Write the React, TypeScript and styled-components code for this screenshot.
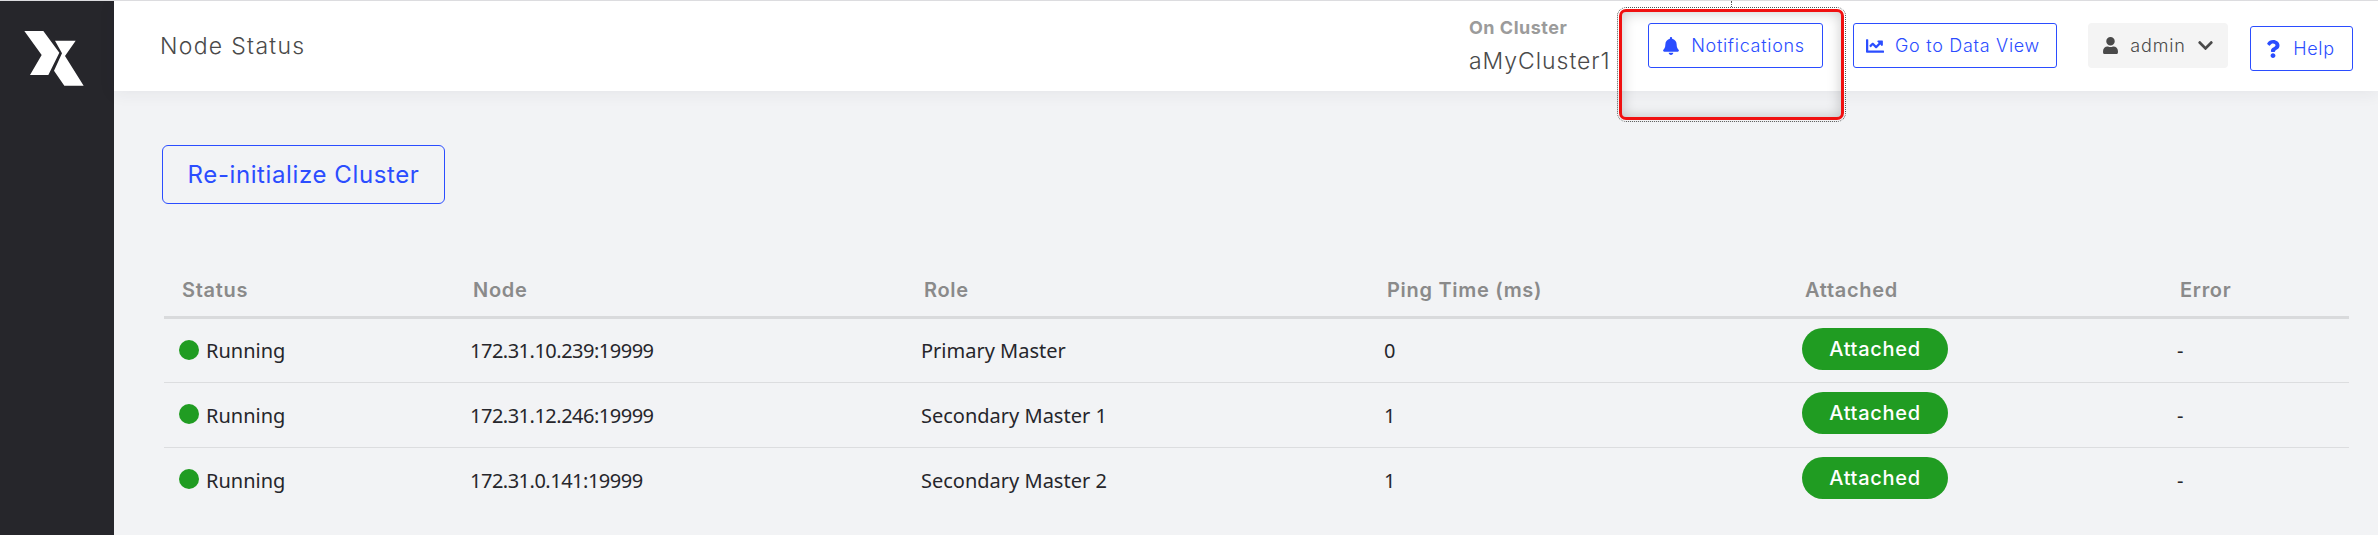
import * as React from 'react';

import styled, { createGlobalStyle } from 'styled-components';
import { FaBell, FaChartLine, FaChevronDown, FaQuestion, FaUser } from 'react-icons/fa';

const BLUE = '#2b4dff';
const GREEN = '#209c22';
const HEADING_FONT = '"Inter", "Noto Sans", sans-serif';
const BODY_FONT = '"Noto Sans", "Open Sans", sans-serif';

const GlobalStyle = createGlobalStyle`
  html, body {
    margin: 0;
    padding: 0;
    background: #f2f3f5;
  }
  * {
    box-sizing: border-box;
  }
`;

const Root = styled.div`
  position: relative;
  display: flex;
  width: 2378px;
  height: 535px;
  overflow: hidden;
  border-top: 1px solid #dcdcdf;
  background: #f2f3f5;
`;

const Sidebar = styled.aside`
  flex: 0 0 114px;
  padding: 19px 0 0 15px;
  background: #26262b;
`;

const Main = styled.div`
  flex: 1;
  display: flex;
  flex-direction: column;
`;

const Header = styled.header`
  position: relative;
  height: 90px;
  flex: none;
  display: flex;
  align-items: center;
  padding: 0 25px 0 46px;
  background: #fff;
  box-shadow: 0 2px 16px rgba(40, 44, 70, 0.07);
`;

const PageTitle = styled.h1`
  flex: 1;
  margin: 0;
  font-family: ${HEADING_FONT};
  font-size: 23px;
  font-weight: 300;
  letter-spacing: 1.3px;
  color: #4a4a4a;
`;

const ClusterInfo = styled.div`
  display: flex;
  flex-direction: column;
  gap: 9px;
  width: 179px;
  font-family: ${HEADING_FONT};
`;

const ClusterLabel = styled.span`
  font-size: 18px;
  line-height: 20px;
  font-weight: 700;
  letter-spacing: 0.5px;
  color: #9b9b9b;
`;

const ClusterName = styled.span`
  font-size: 23px;
  line-height: 28px;
  font-weight: 300;
  letter-spacing: 0.95px;
  color: #4a4a4a;
`;

const HeaderButton = styled.button<{ $width: number; $left: number; $nudge?: number }>`
  display: flex;
  align-items: center;
  justify-content: center;
  gap: 11px;
  width: ${(p) => p.$width}px;
  height: 45px;
  margin-left: ${(p) => p.$left}px;
  margin-top: ${(p) => p.$nudge ?? -1}px;
  padding: 0 4px 0 0;
  border: 1.5px solid ${BLUE};
  border-radius: 3px;
  background: #fff;
  font-family: ${HEADING_FONT};
  font-size: 18px;
  font-weight: 300;
  letter-spacing: 0.7px;
  color: ${BLUE};

  svg {
    flex: none;
  }
`;

const UserMenu = styled.div`
  display: flex;
  align-items: center;
  justify-content: center;
  gap: 11px;
  width: 140px;
  height: 45px;
  margin-left: 31px;
  margin-top: -1px;
  border-radius: 4px;
  background: #f4f4f4;
  font-family: ${HEADING_FONT};
  font-size: 18px;
  font-weight: 300;
  letter-spacing: 0.9px;
  color: #4a4a4a;
`;

const Content = styled.main`
  flex: 1;
  padding: 54px 29px 0 48px;
`;

const ReinitButton = styled.button`
  display: block;
  width: 283px;
  height: 59px;
  padding: 0;
  border: 1.5px solid ${BLUE};
  border-radius: 6px;
  background: transparent;
  font-family: ${HEADING_FONT};
  font-size: 24px;
  font-weight: 400;
  letter-spacing: 0.6px;
  color: ${BLUE};
`;

const Table = styled.table`
  width: 2185px;
  margin: 64px 0 0 2px;
  table-layout: fixed;
  border-collapse: collapse;
`;

const HeadCell = styled.th`
  height: 49px;
  padding: 0 0 4px 18px;
  border-bottom: 3px solid #d9dadc;
  text-align: left;
  font-family: ${HEADING_FONT};
  font-size: 20px;
  font-weight: 600;
  letter-spacing: 0.7px;
  color: #8a8a8a;
`;

const BodyRow = styled.tr`
  height: 65px;
  border-bottom: 1.5px solid #dcdddf;

  &:last-child {
    border-bottom: none;
  }
`;

const BodyCell = styled.td`
  padding: 1px 0 0 15px;
  font-family: ${BODY_FONT};
  font-size: 20px;
  font-weight: 400;
  color: #26262b;
`;

const AddressCell = styled(BodyCell)`
  letter-spacing: -0.5px;
`;

const StatusWrap = styled.span`
  display: flex;
  align-items: center;
  gap: 7px;
`;

const StatusDot = styled.span`
  width: 20px;
  height: 20px;
  margin-top: -2px;
  border-radius: 50%;
  background: ${GREEN};
`;

const AttachedPill = styled.span`
  display: inline-flex;
  align-items: center;
  justify-content: center;
  width: 146px;
  height: 42px;
  margin: -4px 0 0 0;
  border-radius: 21px;
  background: ${GREEN};
  font-family: ${HEADING_FONT};
  font-size: 20px;
  font-weight: 500;
  letter-spacing: 0.7px;
  color: #fff;
`;

// red markup drawn over the screenshot
const Callout = styled.div`
  position: absolute;
  left: 1619px;
  top: 8px;
  width: 225px;
  height: 111px;
  border: 3px solid #f01010;
  border-radius: 7px;
  box-shadow: inset 0 0 14px rgba(0, 0, 0, 0.22);
  outline: 1px dotted #555;
  outline-offset: 1px;
  pointer-events: none;
`;

const CalloutTick = styled.div`
  position: absolute;
  left: 1731px;
  top: 0;
  height: 6px;
  border-left: 1px dotted #555;
`;

const Logo = () => (
  <svg width="80" height="80" viewBox="0 0 240 240" aria-hidden="true">
    <polygon fill="#fff" points="28,33 85,33 133,98 100,165 45,165 80,105" />
    <polygon fill="#fff" points="120,62 182,62 150,108 206,197 148,197 117,152 141,100" />
  </svg>
);

const columns = [
  { title: 'Status', width: 291 },
  { title: 'Node', width: 451 },
  { title: 'Role', width: 463 },
  { title: 'Ping Time (ms)', width: 418 },
  { title: 'Attached', width: 375 },
  { title: 'Error', width: 187 },
];

const nodes = [
  { node: '172.31.10.239:19999', role: 'Primary Master', ping: 0 },
  { node: '172.31.12.246:19999', role: 'Secondary Master 1', ping: 1 },
  { node: '172.31.0.141:19999', role: 'Secondary Master 2', ping: 1 },
];

export default function App() {
  return (
    <Root>
      <GlobalStyle />
      <Sidebar>
        <Logo />
      </Sidebar>
      <Main>
        <Header>
          <PageTitle>Node Status</PageTitle>
          <ClusterInfo>
            <ClusterLabel>On Cluster</ClusterLabel>
            <ClusterName>aMyCluster1</ClusterName>
          </ClusterInfo>
          <HeaderButton $width={175} $left={0}>
            <FaBell size={18} />
            Notifications
          </HeaderButton>
          <HeaderButton $width={204} $left={30}>
            <FaChartLine size={18} />
            Go to Data View
          </HeaderButton>
          <UserMenu>
            <FaUser size={17} />
            admin
            <FaChevronDown size={17} />
          </UserMenu>
          <HeaderButton $width={103} $left={22} $nudge={5}>
            <FaQuestion size={18} />
            Help
          </HeaderButton>
        </Header>
        <Content>
          <ReinitButton>Re-initialize Cluster</ReinitButton>
          <Table>
            <colgroup>
              {columns.map((c) => (
                <col key={c.title} width={c.width} />
              ))}
            </colgroup>
            <thead>
              <tr>
                {columns.map((c) => (
                  <HeadCell key={c.title}>{c.title}</HeadCell>
                ))}
              </tr>
            </thead>
            <tbody>
              {nodes.map((n) => (
                <BodyRow key={n.node}>
                  <BodyCell>
                    <StatusWrap>
                      <StatusDot />
                      Running
                    </StatusWrap>
                  </BodyCell>
                  <AddressCell>{n.node}</AddressCell>
                  <BodyCell>{n.role}</BodyCell>
                  <BodyCell>{n.ping}</BodyCell>
                  <BodyCell>
                    <AttachedPill>Attached</AttachedPill>
                  </BodyCell>
                  <BodyCell>-</BodyCell>
                </BodyRow>
              ))}
            </tbody>
          </Table>
        </Content>
      </Main>
      <CalloutTick />
      <Callout />
    </Root>
  );
}
